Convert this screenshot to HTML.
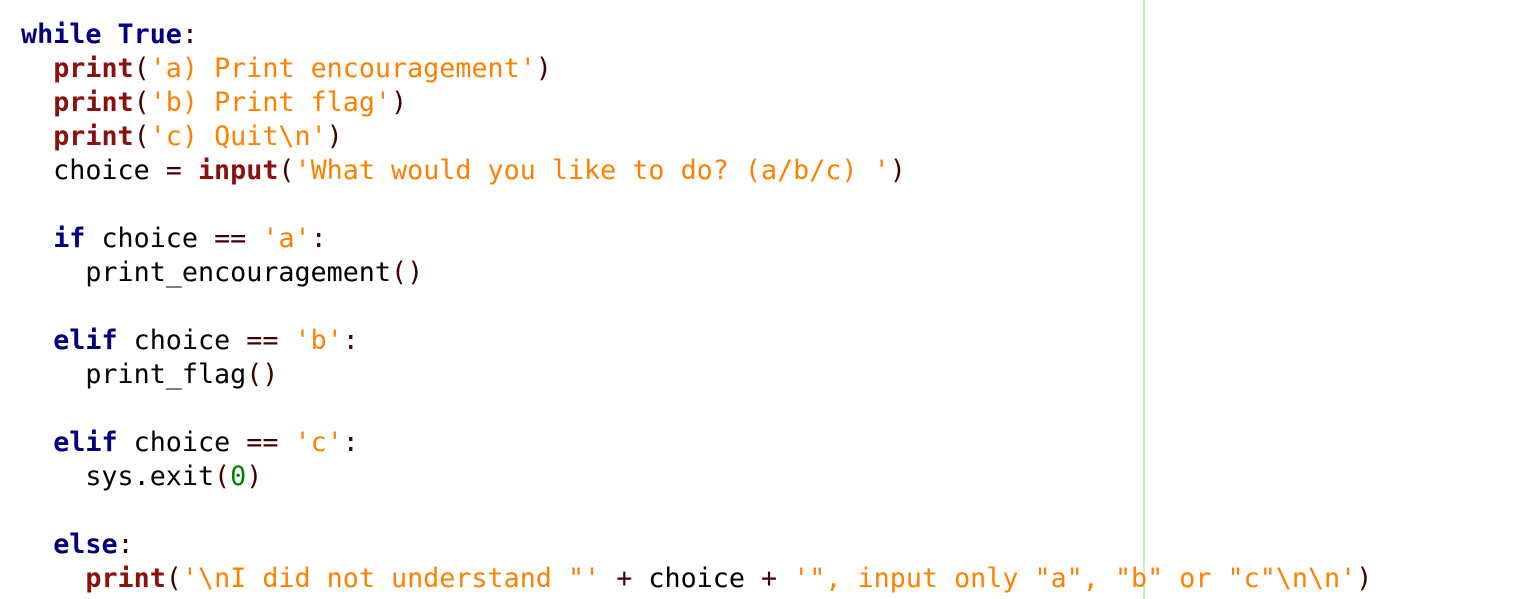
<!DOCTYPE html><html><head><style>
body{margin:0;background:#fff;width:1525px;height:599px;overflow:hidden;position:relative}
pre{margin:0;position:absolute;left:21px;top:18px;font-family:"DejaVu Sans Mono","Liberation Mono",monospace;font-size:26.72px;line-height:34px;color:#000}
.k{color:#000080;font-weight:bold}.b{color:#8b1010;font-weight:bold}.s{color:#ff8000}.p{color:#400000}.n{color:#008000}
.v{position:absolute;left:1143px;top:0;width:2px;height:599px;background:#c8ecc8}
</style></head><body><div class="v"></div><pre><span class="k">while</span> <span class="k">True</span><span class="p">:</span>
  <span class="b">print</span><span class="p">(</span><span class="s">'a) Print encouragement'</span><span class="p">)</span>
  <span class="b">print</span><span class="p">(</span><span class="s">'b) Print flag'</span><span class="p">)</span>
  <span class="b">print</span><span class="p">(</span><span class="s">'c) Quit\n'</span><span class="p">)</span>
  choice <span class="p">=</span> <span class="b">input</span><span class="p">(</span><span class="s">'What would you like to do? (a/b/c) '</span><span class="p">)</span>

  <span class="k">if</span> choice <span class="p">==</span> <span class="s">'a'</span><span class="p">:</span>
    print_encouragement<span class="p">()</span>

  <span class="k">elif</span> choice <span class="p">==</span> <span class="s">'b'</span><span class="p">:</span>
    print_flag<span class="p">()</span>

  <span class="k">elif</span> choice <span class="p">==</span> <span class="s">'c'</span><span class="p">:</span>
    sys.exit<span class="p">(</span><span class="n">0</span><span class="p">)</span>

  <span class="k">else</span><span class="p">:</span>
    <span class="b">print</span><span class="p">(</span><span class="s">'\nI did not understand "'</span> <span class="p">+</span> choice <span class="p">+</span> <span class="s">'", input only "a", "b" or "c"\n\n'</span><span class="p">)</span></pre></body></html>
